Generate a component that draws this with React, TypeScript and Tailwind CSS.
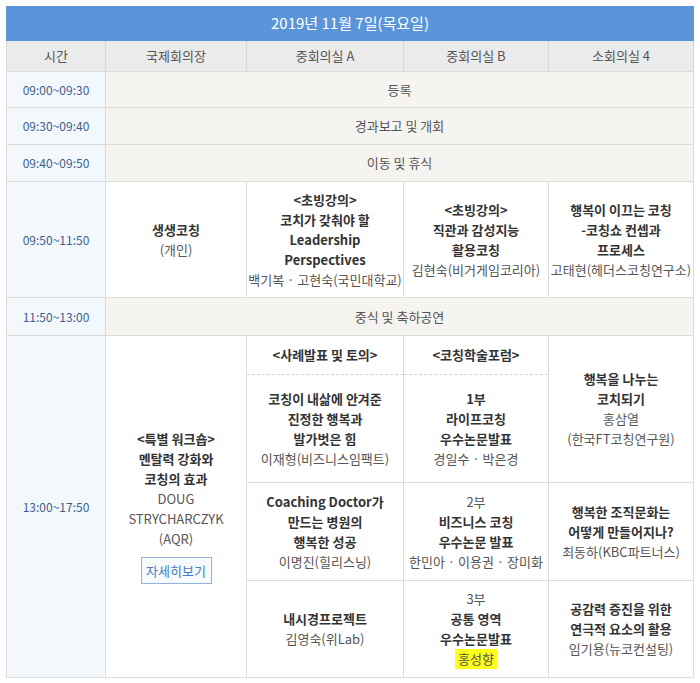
import React from "react";

const font = { fontFamily: '"Noto Sans CJK KR", "Noto Sans", sans-serif' };

function Cell({ className = "", children }: { className?: string; children?: React.ReactNode }) {
  return (
    <div className={`flex flex-col items-center justify-center text-center border-r border-b border-[#dcdcdc] ${className}`}>
      {children}
    </div>
  );
}

// top sub-row of a split cell: solid right border, dashed bottom line
function DashedCell({ children }: { children: React.ReactNode }) {
  return (
    <div className="flex flex-col border-r border-[#dcdcdc]">
      <div className="flex-1 flex items-center justify-center text-center">{children}</div>
      <div className="border-t border-dashed border-[#d4d4d4]" />
    </div>
  );
}

function B({ children }: { children: React.ReactNode }) {
  return <span className="block font-bold text-[#333] whitespace-nowrap">{children}</span>;
}

function N({ children }: { children: React.ReactNode }) {
  return <span className="block text-[#555] whitespace-nowrap">{children}</span>;
}

const Time = ({ t, className = "" }: { t: string; className?: string }) => (
  <Cell className={`bg-[#f3f8fd] text-[#3d5d8a] text-[12px] border-l ${className}`}>{t}</Cell>
);

const Shared = ({ t }: { t: string }) => (
  <Cell className="col-span-4 bg-[#f6f4f0] text-[#555]">{t}</Cell>
);

const Head = ({ t }: { t: string }) => (
  <Cell className="bg-[#ebebeb] text-[#555] border-r-[#d6d6d6]">{t}</Cell>
);

export default function App() {
  return (
    <div className="min-h-screen bg-white pt-[6px] pl-[6px]" style={font}>
      <div className="w-[688px]">
        <div className="h-[35px] bg-[#5b95d9] text-white text-[15px] flex items-center justify-center">
          2019년 11월 7일(목요일)
        </div>
        <div className="grid grid-cols-[100px_141px_157px_145px_145px] grid-rows-[31px_36px_37px_37px_116px_38px_39px_108px_98px_97px] text-[13px] leading-[20px]">
          {/* header */}
          <Cell className="bg-[#ebebeb] text-[#555] border-l border-r-[#d6d6d6]">시간</Cell>
          <Head t="국제회의장" />
          <Head t="중회의실 A" />
          <Head t="중회의실 B" />
          <Head t="소회의실 4" />

          <Time t="09:00~09:30" />
          <Shared t="등록" />
          <Time t="09:30~09:40" />
          <Shared t="경과보고 및 개회" />
          <Time t="09:40~09:50" />
          <Shared t="이동 및 휴식" />

          {/* 09:50 row */}
          <Time t="09:50~11:50" />
          <Cell>
            <B>생생코칭</B>
            <N>(개인)</N>
          </Cell>
          <Cell>
            <B>&lt;초빙강의&gt;</B>
            <B>코치가 갖춰야 할</B>
            <B>Leadership</B>
            <B>Perspectives</B>
            <N>백기복 · 고현숙(국민대학교)</N>
          </Cell>
          <Cell>
            <B>&lt;초빙강의&gt;</B>
            <B>직관과 감성지능</B>
            <B>활용코칭</B>
            <N>김현숙(비거게임코리아)</N>
          </Cell>
          <Cell>
            <B>행복이 이끄는 코칭</B>
            <B>-코칭쇼 컨셉과</B>
            <B>프로세스</B>
            <N>고태현(헤더스코칭연구소)</N>
          </Cell>

          <Time t="11:50~13:00" />
          <Shared t="중식 및 축하공연" />

          {/* afternoon */}
          <Time t="13:00~17:50" className="row-span-4" />
          <Cell className="row-span-4">
            <B>&lt;특별 워크숍&gt;</B>
            <B>멘탈력 강화와</B>
            <B>코칭의 효과</B>
            <N>DOUG</N>
            <N>STRYCHARCZYK</N>
            <N>(AQR)</N>
            <span className="mt-[8px] h-[27px] w-[71px] border border-[#8fb3df] bg-[#f7fafd] text-[#4a7cc0] flex items-center justify-center">
              자세히보기
            </span>
          </Cell>
          <DashedCell>
            <B>&lt;사례발표 및 토의&gt;</B>
          </DashedCell>
          <DashedCell>
            <B>&lt;코칭학술포럼&gt;</B>
          </DashedCell>
          <Cell className="row-span-2">
            <B>행복을 나누는</B>
            <B>코치되기</B>
            <N>홍삼열</N>
            <N>(한국FT코칭연구원)</N>
          </Cell>

          <Cell className="col-start-3 row-start-8">
            <B>코칭이 내삶에 안겨준</B>
            <B>진정한 행복과</B>
            <B>발가벗은 힘</B>
            <N>이재형(비즈니스임팩트)</N>
          </Cell>
          <Cell className="col-start-4 row-start-8">
            <B>1부</B>
            <B>라이프코칭</B>
            <B>우수논문발표</B>
            <N>경일수 · 박은경</N>
          </Cell>

          <Cell className="col-start-3 row-start-9">
            <B>Coaching Doctor가</B>
            <B>만드는 병원의</B>
            <B>행복한 성공</B>
            <N>이명진(힐리스닝)</N>
          </Cell>
          <Cell className="col-start-4 row-start-9">
            <N>2부</N>
            <B>비즈니스 코칭</B>
            <B>우수논문 발표</B>
            <N>한민아 · 이용권 · 장미화</N>
          </Cell>
          <Cell className="col-start-5 row-start-9">
            <B>행복한 조직문화는</B>
            <B>어떻게 만들어지나?</B>
            <N>최동하(KBC파트너스)</N>
          </Cell>

          <Cell className="col-start-3 row-start-10">
            <B>내시경프로젝트</B>
            <N>김영숙(위Lab)</N>
          </Cell>
          <Cell className="col-start-4 row-start-10">
            <N>3부</N>
            <B>공통 영역</B>
            <B>우수논문발표</B>
            <span className="text-[#555] bg-[#ffff1a] px-[3px] whitespace-nowrap">홍성향</span>
          </Cell>
          <Cell className="col-start-5 row-start-10">
            <B>공감력 증진을 위한</B>
            <B>연극적 요소의 활용</B>
            <N>임기용(뉴코컨설팅)</N>
          </Cell>
        </div>
      </div>
    </div>
  );
}
